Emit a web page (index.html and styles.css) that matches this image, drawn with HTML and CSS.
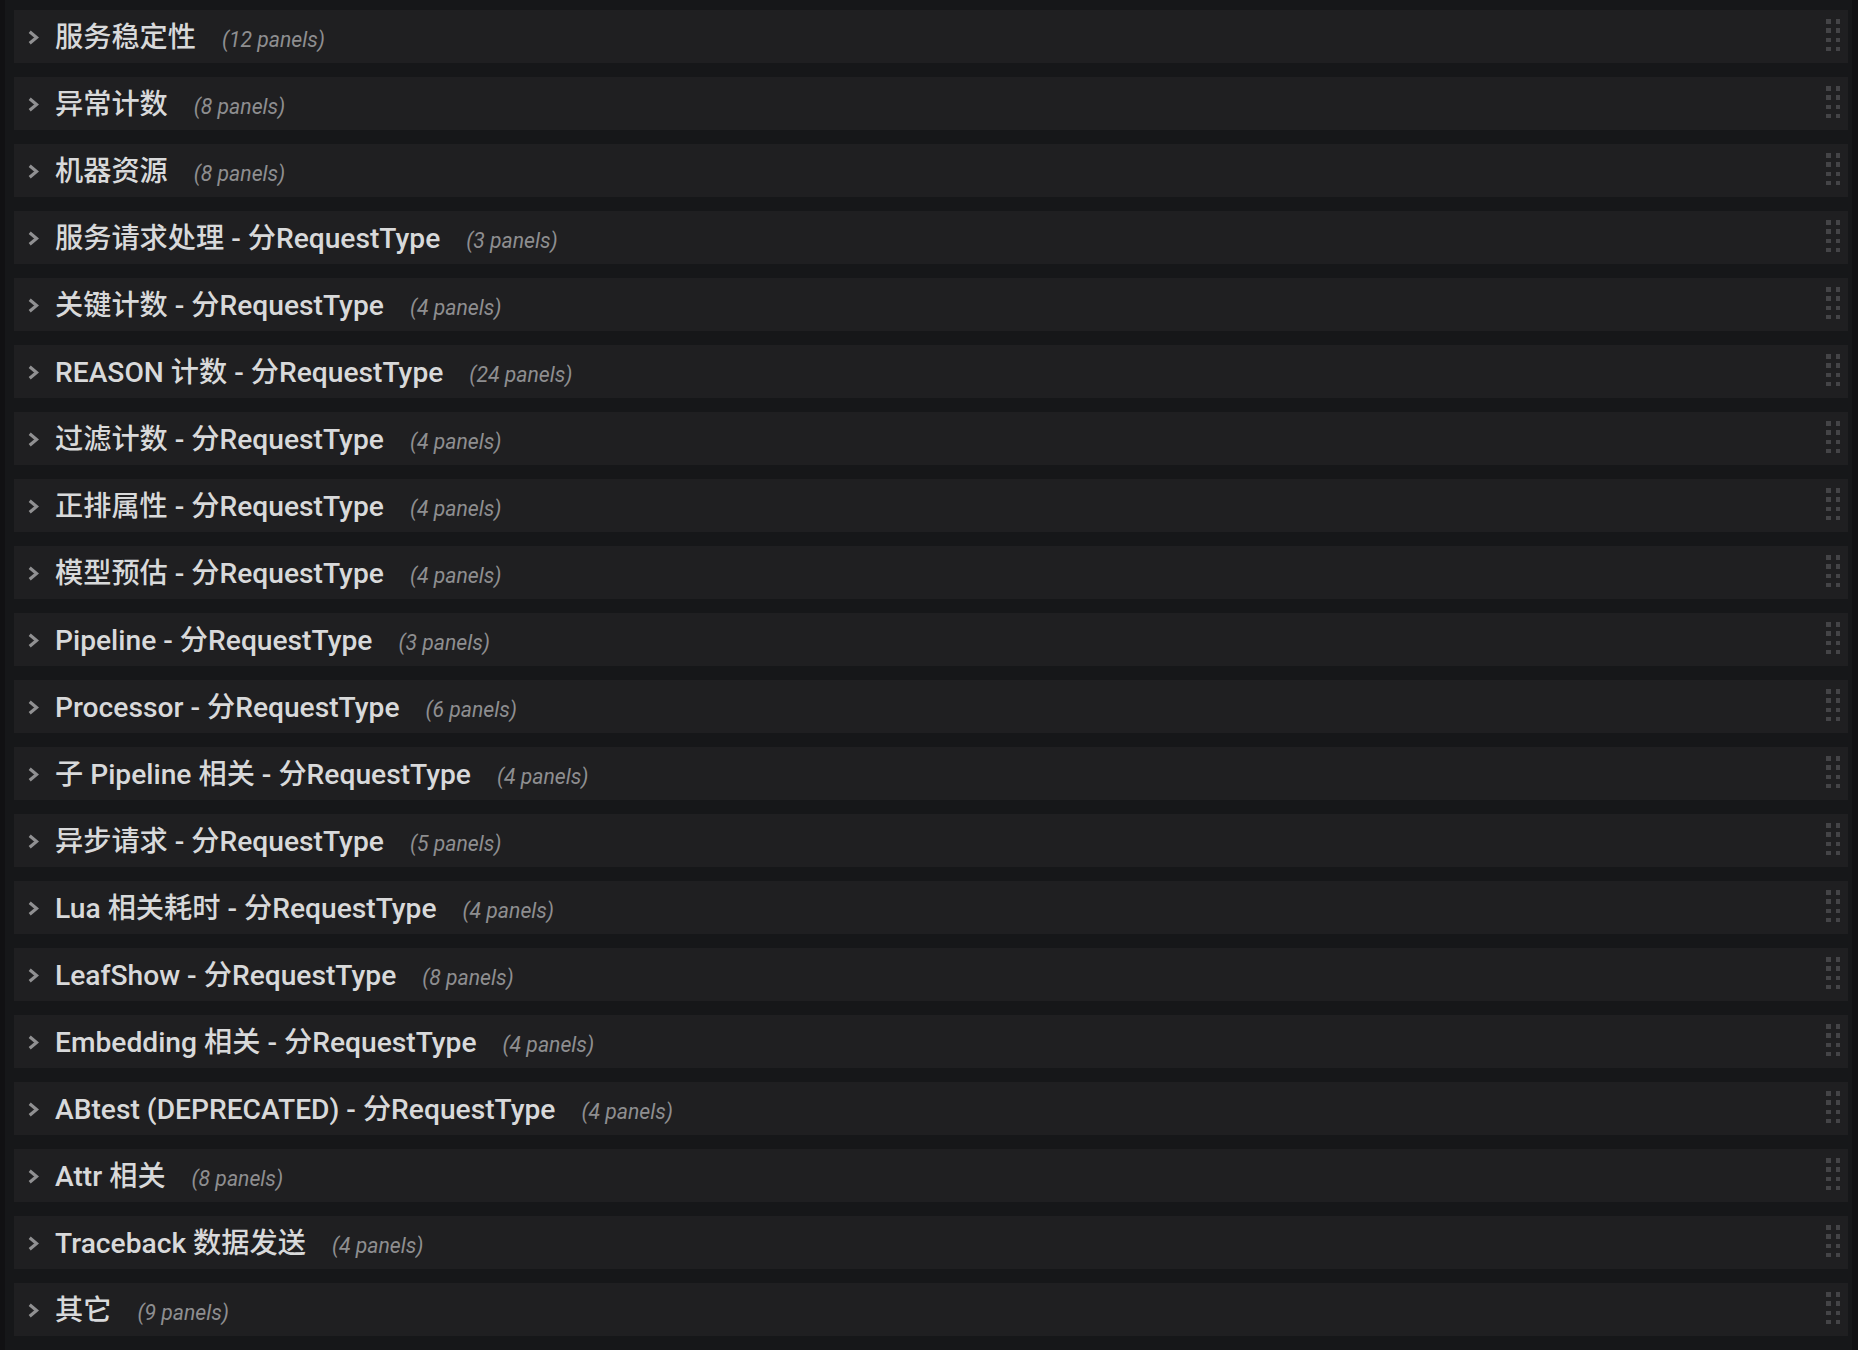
FILE: index.html
```html
<!DOCTYPE html>
<html lang="zh-CN">
<head>
<meta charset="utf-8">
<title>Dashboard rows</title>
<link rel="stylesheet" href="styles.css">
</head>
<body>
<div class="page">
  <div class="edge"></div>
  <div class="rows">
    <div class="row"><svg class="chev" viewBox="0 0 11 15"><polyline points="1.7,1.7 8.6,7.5 1.7,13.3"/></svg><div class="label"><span class="title">服务稳定性</span><span class="count">(12 panels)</span></div><div class="grip"><i></i><i></i><i></i><i></i><i></i><i></i><i></i><i></i></div></div>
    <div class="row"><svg class="chev" viewBox="0 0 11 15"><polyline points="1.7,1.7 8.6,7.5 1.7,13.3"/></svg><div class="label"><span class="title">异常计数</span><span class="count">(8 panels)</span></div><div class="grip"><i></i><i></i><i></i><i></i><i></i><i></i><i></i><i></i></div></div>
    <div class="row"><svg class="chev" viewBox="0 0 11 15"><polyline points="1.7,1.7 8.6,7.5 1.7,13.3"/></svg><div class="label"><span class="title">机器资源</span><span class="count">(8 panels)</span></div><div class="grip"><i></i><i></i><i></i><i></i><i></i><i></i><i></i><i></i></div></div>
    <div class="row"><svg class="chev" viewBox="0 0 11 15"><polyline points="1.7,1.7 8.6,7.5 1.7,13.3"/></svg><div class="label"><span class="title">服务请求处理 - 分RequestType</span><span class="count">(3 panels)</span></div><div class="grip"><i></i><i></i><i></i><i></i><i></i><i></i><i></i><i></i></div></div>
    <div class="row"><svg class="chev" viewBox="0 0 11 15"><polyline points="1.7,1.7 8.6,7.5 1.7,13.3"/></svg><div class="label"><span class="title">关键计数 - 分RequestType</span><span class="count">(4 panels)</span></div><div class="grip"><i></i><i></i><i></i><i></i><i></i><i></i><i></i><i></i></div></div>
    <div class="row"><svg class="chev" viewBox="0 0 11 15"><polyline points="1.7,1.7 8.6,7.5 1.7,13.3"/></svg><div class="label"><span class="title">REASON 计数 - 分RequestType</span><span class="count">(24 panels)</span></div><div class="grip"><i></i><i></i><i></i><i></i><i></i><i></i><i></i><i></i></div></div>
    <div class="row"><svg class="chev" viewBox="0 0 11 15"><polyline points="1.7,1.7 8.6,7.5 1.7,13.3"/></svg><div class="label"><span class="title">过滤计数 - 分RequestType</span><span class="count">(4 panels)</span></div><div class="grip"><i></i><i></i><i></i><i></i><i></i><i></i><i></i><i></i></div></div>
    <div class="row"><svg class="chev" viewBox="0 0 11 15"><polyline points="1.7,1.7 8.6,7.5 1.7,13.3"/></svg><div class="label"><span class="title">正排属性 - 分RequestType</span><span class="count">(4 panels)</span></div><div class="grip"><i></i><i></i><i></i><i></i><i></i><i></i><i></i><i></i></div></div>
    <div class="row"><svg class="chev" viewBox="0 0 11 15"><polyline points="1.7,1.7 8.6,7.5 1.7,13.3"/></svg><div class="label"><span class="title">模型预估 - 分RequestType</span><span class="count">(4 panels)</span></div><div class="grip"><i></i><i></i><i></i><i></i><i></i><i></i><i></i><i></i></div></div>
    <div class="row"><svg class="chev" viewBox="0 0 11 15"><polyline points="1.7,1.7 8.6,7.5 1.7,13.3"/></svg><div class="label"><span class="title">Pipeline - 分RequestType</span><span class="count">(3 panels)</span></div><div class="grip"><i></i><i></i><i></i><i></i><i></i><i></i><i></i><i></i></div></div>
    <div class="row"><svg class="chev" viewBox="0 0 11 15"><polyline points="1.7,1.7 8.6,7.5 1.7,13.3"/></svg><div class="label"><span class="title">Processor - 分RequestType</span><span class="count">(6 panels)</span></div><div class="grip"><i></i><i></i><i></i><i></i><i></i><i></i><i></i><i></i></div></div>
    <div class="row"><svg class="chev" viewBox="0 0 11 15"><polyline points="1.7,1.7 8.6,7.5 1.7,13.3"/></svg><div class="label"><span class="title">子 Pipeline 相关 - 分RequestType</span><span class="count">(4 panels)</span></div><div class="grip"><i></i><i></i><i></i><i></i><i></i><i></i><i></i><i></i></div></div>
    <div class="row"><svg class="chev" viewBox="0 0 11 15"><polyline points="1.7,1.7 8.6,7.5 1.7,13.3"/></svg><div class="label"><span class="title">异步请求 - 分RequestType</span><span class="count">(5 panels)</span></div><div class="grip"><i></i><i></i><i></i><i></i><i></i><i></i><i></i><i></i></div></div>
    <div class="row"><svg class="chev" viewBox="0 0 11 15"><polyline points="1.7,1.7 8.6,7.5 1.7,13.3"/></svg><div class="label"><span class="title">Lua 相关耗时 - 分RequestType</span><span class="count">(4 panels)</span></div><div class="grip"><i></i><i></i><i></i><i></i><i></i><i></i><i></i><i></i></div></div>
    <div class="row"><svg class="chev" viewBox="0 0 11 15"><polyline points="1.7,1.7 8.6,7.5 1.7,13.3"/></svg><div class="label"><span class="title">LeafShow - 分RequestType</span><span class="count">(8 panels)</span></div><div class="grip"><i></i><i></i><i></i><i></i><i></i><i></i><i></i><i></i></div></div>
    <div class="row"><svg class="chev" viewBox="0 0 11 15"><polyline points="1.7,1.7 8.6,7.5 1.7,13.3"/></svg><div class="label"><span class="title">Embedding 相关 - 分RequestType</span><span class="count">(4 panels)</span></div><div class="grip"><i></i><i></i><i></i><i></i><i></i><i></i><i></i><i></i></div></div>
    <div class="row"><svg class="chev" viewBox="0 0 11 15"><polyline points="1.7,1.7 8.6,7.5 1.7,13.3"/></svg><div class="label"><span class="title">ABtest (DEPRECATED) - 分RequestType</span><span class="count">(4 panels)</span></div><div class="grip"><i></i><i></i><i></i><i></i><i></i><i></i><i></i><i></i></div></div>
    <div class="row"><svg class="chev" viewBox="0 0 11 15"><polyline points="1.7,1.7 8.6,7.5 1.7,13.3"/></svg><div class="label"><span class="title">Attr 相关</span><span class="count">(8 panels)</span></div><div class="grip"><i></i><i></i><i></i><i></i><i></i><i></i><i></i><i></i></div></div>
    <div class="row"><svg class="chev" viewBox="0 0 11 15"><polyline points="1.7,1.7 8.6,7.5 1.7,13.3"/></svg><div class="label"><span class="title">Traceback 数据发送</span><span class="count">(4 panels)</span></div><div class="grip"><i></i><i></i><i></i><i></i><i></i><i></i><i></i><i></i></div></div>
    <div class="row"><svg class="chev" viewBox="0 0 11 15"><polyline points="1.7,1.7 8.6,7.5 1.7,13.3"/></svg><div class="label"><span class="title">其它</span><span class="count">(9 panels)</span></div><div class="grip"><i></i><i></i><i></i><i></i><i></i><i></i><i></i><i></i></div></div>
  </div>
  <div class="edge edge-right"></div>
</div>
</body>
</html>
```

FILE: styles.css
```css
html, body {
  margin: 0;
  padding: 0;
  background: #161719;
  height: 100%;
  overflow: hidden;
}

.page {
  display: flex;
  height: 1350px;
}

.edge {
  width: 5px;
  flex: none;
  background: #111113;
}

.edge-right {
  width: 6px;
}

.rows {
  flex: 1;
  display: flex;
  flex-direction: column;
  gap: 14.5px;
  padding: 10px 4px 0 9px;
}

.row {
  height: 52.5px;
  flex: none;
  display: flex;
  align-items: center;
  background: #1f1f21;
  padding: 0 8px 0 14px;
  box-sizing: border-box;
}

.chev {
  width: 11px;
  height: 15px;
  flex: none;
  margin-top: 3px;
  fill: none;
  stroke: #909092;
  stroke-width: 3.2;
  stroke-linecap: butt;
  stroke-linejoin: miter;
}

.label {
  display: flex;
  align-items: baseline;
  margin-left: 16px;
  margin-top: 3px;
  white-space: nowrap;
}

.title {
  font-family: Roboto, "Noto Sans CJK SC", sans-serif;
  font-weight: 500;
  font-size: 28.2px;
  line-height: 36px;
  color: #d8d9da;
}

.count {
  margin-left: 26px;
  font-family: Roboto, "Noto Sans", sans-serif;
  font-style: italic;
  font-size: 21.2px;
  color: #8e8e90;
}

.grip {
  margin-left: auto;
  display: grid;
  grid-template-columns: 4.5px 4.5px;
  grid-auto-rows: 4.5px;
  column-gap: 4.8px;
  row-gap: 4.8px;
  margin-top: -2px;
}

.grip i {
  display: block;
  background: #444447;
}
```
